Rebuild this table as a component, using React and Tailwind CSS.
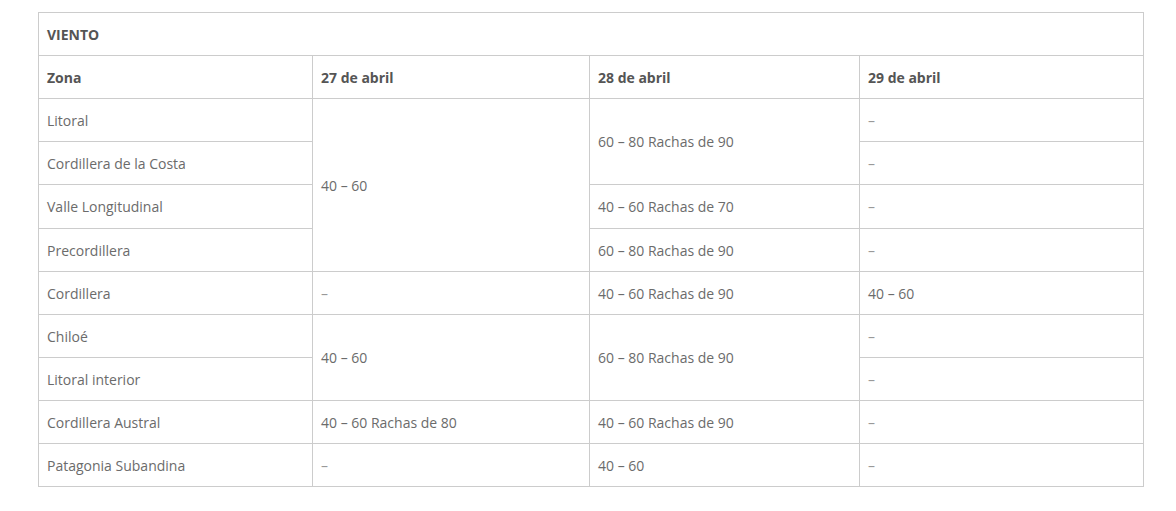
import React from 'react';

const cell = "border border-[#cccccc] px-2 align-middle";
const dash = `${cell} text-[#999999]`;

export default function App() {
  return (
    <div className="bg-white w-[1176px] h-[511px] pt-3 pl-[38px] font-['Open_Sans',sans-serif] text-[14px] text-[#6b6b6b]">
      <table className="border-collapse table-fixed w-[1105px]">
        <colgroup>
          <col className="w-[274px]" />
          <col className="w-[277px]" />
          <col className="w-[270px]" />
          <col className="w-[284px]" />
        </colgroup>
        <tbody>
          <tr className="h-[43px]">
            <td colSpan={4} className={`${cell} font-bold text-[#555555]`}>VIENTO</td>
          </tr>
          <tr className="h-[43px] font-bold text-[#555555]">
            <td className={cell}>Zona</td>
            <td className={cell}>27 de abril</td>
            <td className={cell}>28 de abril</td>
            <td className={cell}>29 de abril</td>
          </tr>
          <tr className="h-[43px]">
            <td className={cell}>Litoral</td>
            <td rowSpan={4} className={cell}>40 – 60</td>
            <td rowSpan={2} className={cell}>60 – 80 Rachas de 90</td>
            <td className={dash}>–</td>
          </tr>
          <tr className="h-[43px]">
            <td className={cell}>Cordillera de la Costa</td>
            <td className={dash}>–</td>
          </tr>
          <tr className="h-[44px]">
            <td className={cell}>Valle Longitudinal</td>
            <td className={cell}>40 – 60 Rachas de 70</td>
            <td className={dash}>–</td>
          </tr>
          <tr className="h-[43px]">
            <td className={cell}>Precordillera</td>
            <td className={cell}>60 – 80 Rachas de 90</td>
            <td className={dash}>–</td>
          </tr>
          <tr className="h-[43px]">
            <td className={cell}>Cordillera</td>
            <td className={dash}>–</td>
            <td className={cell}>40 – 60 Rachas de 90</td>
            <td className={cell}>40 – 60</td>
          </tr>
          <tr className="h-[43px]">
            <td className={cell}>Chiloé</td>
            <td rowSpan={2} className={cell}>40 – 60</td>
            <td rowSpan={2} className={cell}>60 – 80 Rachas de 90</td>
            <td className={dash}>–</td>
          </tr>
          <tr className="h-[43px]">
            <td className={cell}>Litoral interior</td>
            <td className={dash}>–</td>
          </tr>
          <tr className="h-[43px]">
            <td className={cell}>Cordillera Austral</td>
            <td className={cell}>40 – 60 Rachas de 80</td>
            <td className={cell}>40 – 60 Rachas de 90</td>
            <td className={dash}>–</td>
          </tr>
          <tr className="h-[43px]">
            <td className={cell}>Patagonia Subandina</td>
            <td className={dash}>–</td>
            <td className={cell}>40 – 60</td>
            <td className={dash}>–</td>
          </tr>
        </tbody>
      </table>
    </div>
  );
}
